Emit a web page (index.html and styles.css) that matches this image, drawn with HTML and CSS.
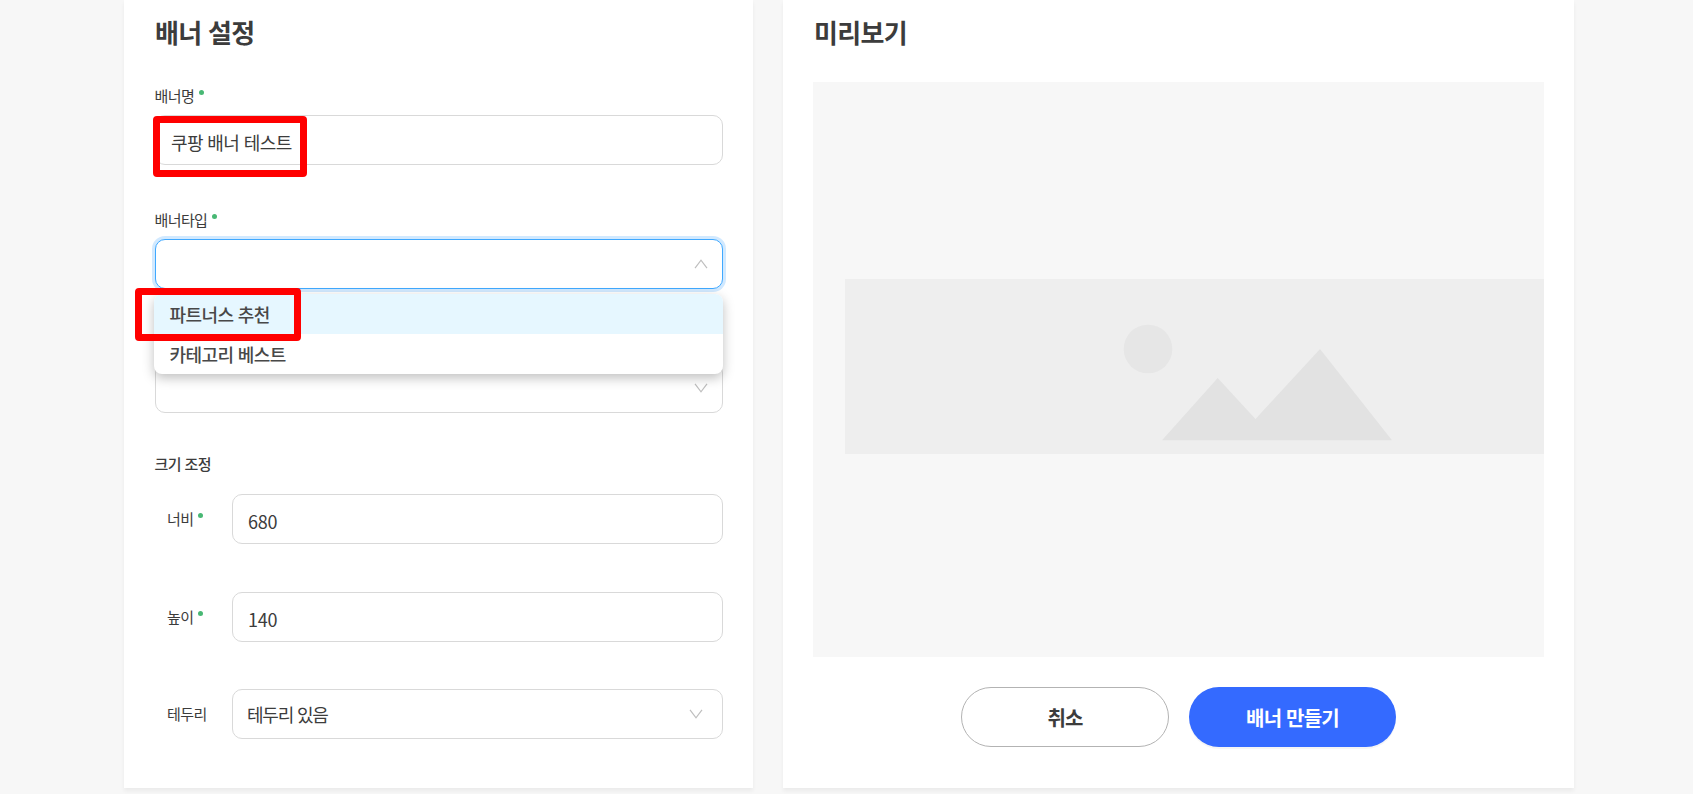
FILE: index.html
```html
<!DOCTYPE html>
<html lang="ko">
<head>
    <meta charset="UTF-8">
    <meta name="viewport" content="width=device-width, initial-scale=1.0">
    <title>배너 설정</title>
    <link rel="stylesheet" href="styles.css">
</head>
<body>

<div class="page">
    <section class="card settings">
        <h2>배너 설정</h2>

        <div class="field">
            <label class="required">배너명</label>
            <div class="input"><span>쿠팡 배너 테스트</span></div>
            <div class="mark mark-name"></div>
        </div>

        <div class="field">
            <label class="required">배너타입</label>
            <div class="input select open">
                <svg class="arrow" viewBox="0 0 14 10"><path d="M1 9.2L7 1.2L13 9.2"/></svg>
            </div>
            <ul class="dropdown">
                <li class="active">파트너스 추천</li>
                <li>카테고리 베스트</li>
            </ul>
            <div class="mark mark-type"></div>
        </div>

        <div class="field">
            <label></label>
            <div class="input select">
                <svg class="arrow" viewBox="0 0 14 10"><path d="M1 .8L7 8.8L13 .8"/></svg>
            </div>
        </div>

        <h3>크기 조정</h3>

        <div class="row">
            <label class="required">너비</label>
            <div class="input number"><span>680</span></div>
        </div>
        <div class="row">
            <label class="required">높이</label>
            <div class="input number"><span>140</span></div>
        </div>
        <div class="row">
            <label>테두리</label>
            <div class="input select border-select">
                <span>테두리 있음</span>
                <svg class="arrow" viewBox="0 0 14 10"><path d="M1 .8L7 8.8L13 .8"/></svg>
            </div>
        </div>
    </section>

    <section class="card preview">
        <h2>미리보기</h2>
        <div class="preview-box">
            <svg class="placeholder" viewBox="0 0 699 175">
                <circle cx="303" cy="70" r="24.3" fill="#e6e6e6"/>
                <path d="M317 161.3L372.7 99L410.5 140L475 70L547 161.3Z" fill="#e2e2e2"/>
            </svg>
        </div>
        <div class="buttons">
            <button class="btn cancel">취소</button>
            <button class="btn primary">배너 만들기</button>
        </div>
    </section>
</div>

</body>
</html>
```
FILE: styles.css
```css
* {
    box-sizing: border-box;
}

body {
    margin: 0;
    height: 794px;
    background-color: #f7f7f7;
    color: #3c3c3c;
    font-family: "Noto Sans CJK KR", sans-serif;
    overflow: hidden;
}

.page {
    display: flex;
    gap: 30px;
    width: 1450px;
    height: 788px;
    margin-left: 124px;
}

.card {
    background-color: #fff;
    box-shadow: 0 3px 4px rgba(0, 0, 0, 0.05);
}

.settings {
    width: 629px;
    padding: 14px 30px 0 31px;
}

.preview {
    width: 791px;
    padding: 14px 30px 0;
}

h2 {
    margin: 0;
    height: 36px;
    line-height: 36px;
    font-size: 26px;
    letter-spacing: -0.7px;
    font-weight: 700;
}

.preview h2 {
    padding-left: 1px;
}

/* 입력 필드 */
.field {
    position: relative;
    margin-top: 34px;
}

h2 + .field {
    margin-top: 31px;
}

label {
    display: flex;
    height: 30px;
    line-height: 30px;
    font-size: 15px;
    letter-spacing: -0.6px;
    text-indent: -0.5px;
}

.field label {
    margin-bottom: 4px;
}

.field + .field {
    margin-top: 40px;
}

.required::after {
    content: "";
    width: 5px;
    height: 5px;
    margin: 8.6px 0 0 4.6px;
    border-radius: 50%;
    background-color: #48b874;
}

.input {
    display: flex;
    align-items: center;
    height: 50px;
    padding: 4px 15px 0;
    border: 1px solid #d9d9d9;
    border-radius: 10px;
    background-color: #fff;
    font-size: 18px;
    letter-spacing: -0.6px;
}

.number {
    letter-spacing: -0.3px;
}

.select {
    padding: 0 14px 0 15px;
}

.open {
    border-color: #40a9ff;
    box-shadow: 0 0 0 3px rgba(24, 144, 255, 0.2);
}

.arrow {
    width: 14px;
    height: 10px;
    margin-left: auto;
    fill: none;
    stroke: #bfbfbf;
    stroke-width: 1.2;
}

.dropdown {
    position: absolute;
    z-index: 1;
    top: 89px;
    left: -1px;
    right: 0;
    margin: 0;
    padding: 0;
    list-style: none;
    border-radius: 8px;
    background-color: #fff;
    box-shadow: 0 4px 12px rgba(0, 0, 0, 0.25);
    overflow: hidden;
}

.dropdown li {
    height: 40px;
    padding: 0 15.5px;
    line-height: 40px;
    font-size: 18px;
    font-weight: 500;
    letter-spacing: -0.6px;
    color: #484848;
}

.dropdown .active {
    background-color: #e6f7ff;
}

/* 강조 표시 */
.mark {
    position: absolute;
    z-index: 2;
    border: 7px solid #f00;
    border-radius: 4px;
}

.mark-name {
    top: 35px;
    left: -2px;
    width: 154px;
    height: 61px;
}

.mark-type {
    top: 83px;
    left: -20px;
    width: 166px;
    height: 53px;
}

h3 {
    margin: 36px 0 15px;
    height: 30px;
    line-height: 29px;
    font-size: 15px;
    font-weight: 500;
    letter-spacing: -0.6px;
    text-indent: -0.5px;
}

.row {
    display: flex;
    margin-bottom: 48px;
}

.row:last-child {
    margin-top: -1px;
}

.row label {
    width: 77px;
    padding-left: 12.5px;
    margin-top: 10px;
}

.row .input {
    flex: 1;
}

.row .border-select {
    padding: 0 19px 0 14px;
    letter-spacing: -1.2px;
}

/* 미리보기 */
.preview-box {
    display: flex;
    align-items: center;
    height: 575px;
    margin-top: 32px;
    padding: 0 0 6px 32px;
    background-color: #f7f7f7;
}

.placeholder {
    width: 699px;
    height: 175px;
    background-color: #eee;
}

.buttons {
    display: flex;
    justify-content: center;
    gap: 20px;
    margin-top: 30px;
}

.btn {
    width: 208px;
    height: 60px;
    padding: 0;
    border: 1px solid #b3b3b3;
    border-radius: 30px;
    background-color: #fff;
    color: #3c3c3c;
    font-family: inherit;
    font-size: 20px;
    font-weight: 700;
    letter-spacing: -0.8px;
}

.primary {
    width: 207px;
    border: none;
    background-color: #346aff;
    color: #fff;
    box-shadow: 0 2px 0 rgba(0, 0, 0, 0.04);
}
```
